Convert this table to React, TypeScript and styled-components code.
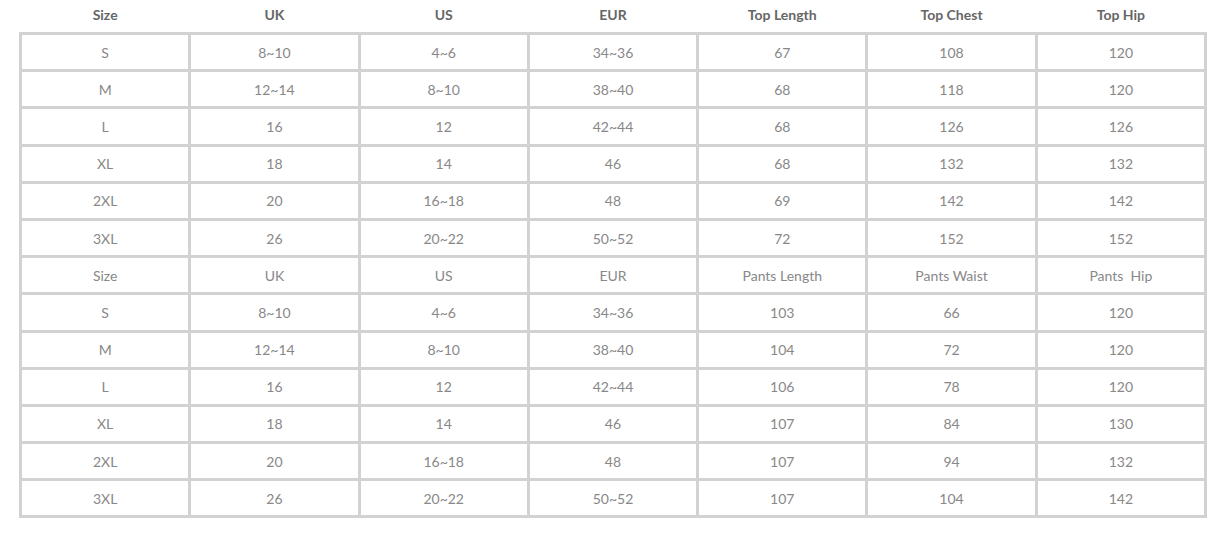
import * as React from "react"
import { styled, createGlobalStyle } from "styled-components"

const GlobalStyle = createGlobalStyle`
  html, body {
    margin: 0;
    padding: 0;
    background: #fff;
  }
  body {
    font-family: Lato, "Open Sans", "Liberation Sans", sans-serif;
  }
`

const columns = ["Size", "UK", "US", "EUR", "Top Length", "Top Chest", "Top Hip"]

const topRows = [
  ["S", "8~10", "4~6", "34~36", "67", "108", "120"],
  ["M", "12~14", "8~10", "38~40", "68", "118", "120"],
  ["L", "16", "12", "42~44", "68", "126", "126"],
  ["XL", "18", "14", "46", "68", "132", "132"],
  ["2XL", "20", "16~18", "48", "69", "142", "142"],
  ["3XL", "26", "20~22", "50~52", "72", "152", "152"],
]

const pantsHead = ["Size", "UK", "US", "EUR", "Pants Length", "Pants Waist", "Pants  Hip"]

const pantsRows = [
  ["S", "8~10", "4~6", "34~36", "103", "66", "120"],
  ["M", "12~14", "8~10", "38~40", "104", "72", "120"],
  ["L", "16", "12", "42~44", "106", "78", "120"],
  ["XL", "18", "14", "46", "107", "84", "130"],
  ["2XL", "20", "16~18", "48", "107", "94", "132"],
  ["3XL", "26", "20~22", "50~52", "107", "104", "142"],
]

export default function App() {
  const body = [...topRows, pantsHead, ...pantsRows]
  return (
    <Page>
      <GlobalStyle />
      <SizeTable>
        <colgroup>
          {columns.map((c) => (
            <col key={c} />
          ))}
        </colgroup>
        <thead>
          <tr>
            {columns.map((c) => (
              <HeadCell key={c}>{c}</HeadCell>
            ))}
          </tr>
        </thead>
        <tbody>
          {body.map((row, i) => (
            <tr key={i}>
              {row.map((v, j) => (
                <Cell key={j}>{v}</Cell>
              ))}
            </tr>
          ))}
        </tbody>
      </SizeTable>
    </Page>
  )
}

const Page = styled.div`
  padding: 0 0 0 19px;
`

const SizeTable = styled.table`
  width: 1188px;
  table-layout: fixed;
  border-collapse: collapse;

  col {
    width: 14.2857%;
  }
`

const HeadCell = styled.th`
  height: 29px;
  padding: 2px 0 1px;
  line-height: 26px;
  font-size: 14px;
  font-weight: 700;
  color: #666;
  text-align: center;
  vertical-align: top;
  border: none;
  white-space: pre;
`

const Cell = styled.td`
  height: 34.2px;
  padding: 0;
  font-size: 14px;
  font-weight: 400;
  color: #888;
  text-align: center;
  vertical-align: middle;
  border: 3px solid #d2d2d2;
  white-space: pre;
`
